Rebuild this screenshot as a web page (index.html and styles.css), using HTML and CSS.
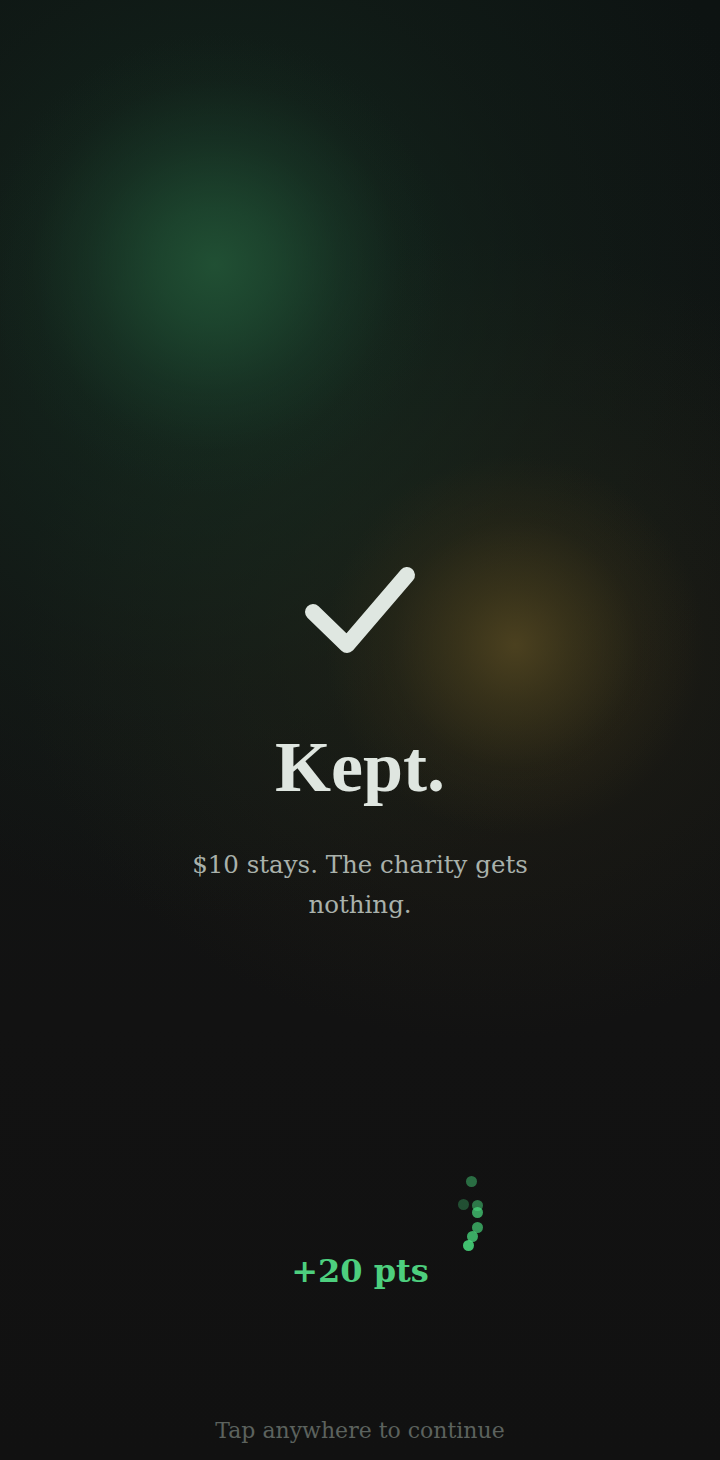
FILE: index.html
```html
<!DOCTYPE html>
<html lang="en">
<head>
<meta charset="utf-8">
<title>Kept.</title>
<link rel="stylesheet" href="styles.css">
</head>
<body>
<main class="screen">
  <svg class="check" viewBox="0 0 120 100" aria-hidden="true">
    <polyline points="13,52 47,85 107,15" fill="none" stroke="#dfe7e1" stroke-width="16" stroke-linecap="round" stroke-linejoin="round"/>
  </svg>
  <h1 class="title">Kept.</h1>
  <p class="subtitle">$10 stays. The charity gets nothing.</p>
  <p class="points">+20 pts</p>
  <p class="hint">Tap anywhere to continue</p>
  <div class="particles" aria-hidden="true">
    <span class="dot d1"></span>
    <span class="dot d2"></span>
    <span class="dot d3"></span>
    <span class="dot d4"></span>
    <span class="dot d5"></span>
    <span class="dot d6"></span>
    <span class="dot d7"></span>
  </div>
</main>
</body>
</html>
```

FILE: styles.css
```css
html, body {
  margin: 0;
  padding: 0;
  background: #101111;
}

.screen {
  position: relative;
  width: 720px;
  height: 1460px;
  box-sizing: border-box;
  padding-top: 560px;
  display: flex;
  flex-direction: column;
  align-items: center;
  overflow: hidden;
  background:
    radial-gradient(circle 230px at 215px 265px, rgba(34, 84, 54, 0.9) 0%, rgba(32, 80, 52, 0.7) 25%, rgba(28, 68, 46, 0.4) 55%, rgba(24, 56, 38, 0.12) 80%, rgba(24, 56, 38, 0) 100%),
    radial-gradient(circle 190px at 515px 645px, rgba(80, 68, 32, 0.9) 0%, rgba(70, 60, 28, 0.65) 30%, rgba(56, 48, 24, 0.3) 65%, rgba(40, 36, 22, 0) 100%),
    radial-gradient(ellipse 560px 600px at 220px 320px, rgba(22, 50, 36, 0.7) 0%, rgba(22, 40, 30, 0.3) 60%, rgba(22, 40, 30, 0) 100%),
    radial-gradient(ellipse 460px 400px at 480px 640px, rgba(40, 36, 22, 0.6) 0%, rgba(30, 28, 20, 0) 100%),
    linear-gradient(180deg, #0d1312 0%, #111413 40%, #121212 70%, #111111 100%);
}

.check {
  display: block;
  width: 120px;
  height: 100px;
}

.title {
  margin: 71px 0 0;
  font-family: "Liberation Serif", "Times New Roman", serif;
  font-weight: 700;
  font-size: 72px;
  line-height: 72px;
  color: #dfe6e0;
}

.subtitle {
  margin: 42px 0 0;
  width: 380px;
  text-align: center;
  font-family: "DejaVu Serif", serif;
  font-size: 24.5px;
  line-height: 40px;
  color: #a9b1ab;
}

.points {
  margin: 326px 0 0;
  font-family: "DejaVu Serif", serif;
  font-weight: 700;
  font-size: 32px;
  line-height: 40px;
  color: #4dcf7e;
}

.hint {
  margin: 125px 0 0;
  font-family: "DejaVu Serif", serif;
  font-size: 22px;
  line-height: 30px;
  color: #5c625e;
}

.particles {
  position: absolute;
  left: 0;
  top: 0;
  width: 720px;
  height: 1460px;
  pointer-events: none;
}

.dot {
  position: absolute;
  width: 11px;
  height: 11px;
  margin: -5.5px 0 0 -5.5px;
  border-radius: 50%;
  background: #4ade80;
}

.d1 { left: 471px; top: 1181px; opacity: 0.45; }
.d2 { left: 463px; top: 1204px; opacity: 0.3; }
.d3 { left: 477px; top: 1205px; opacity: 0.5; }
.d4 { left: 477px; top: 1212px; opacity: 0.7; }
.d5 { left: 477px; top: 1227px; opacity: 0.65; }
.d6 { left: 472px; top: 1236px; opacity: 0.75; }
.d7 { left: 468px; top: 1245px; opacity: 0.85; }
```
